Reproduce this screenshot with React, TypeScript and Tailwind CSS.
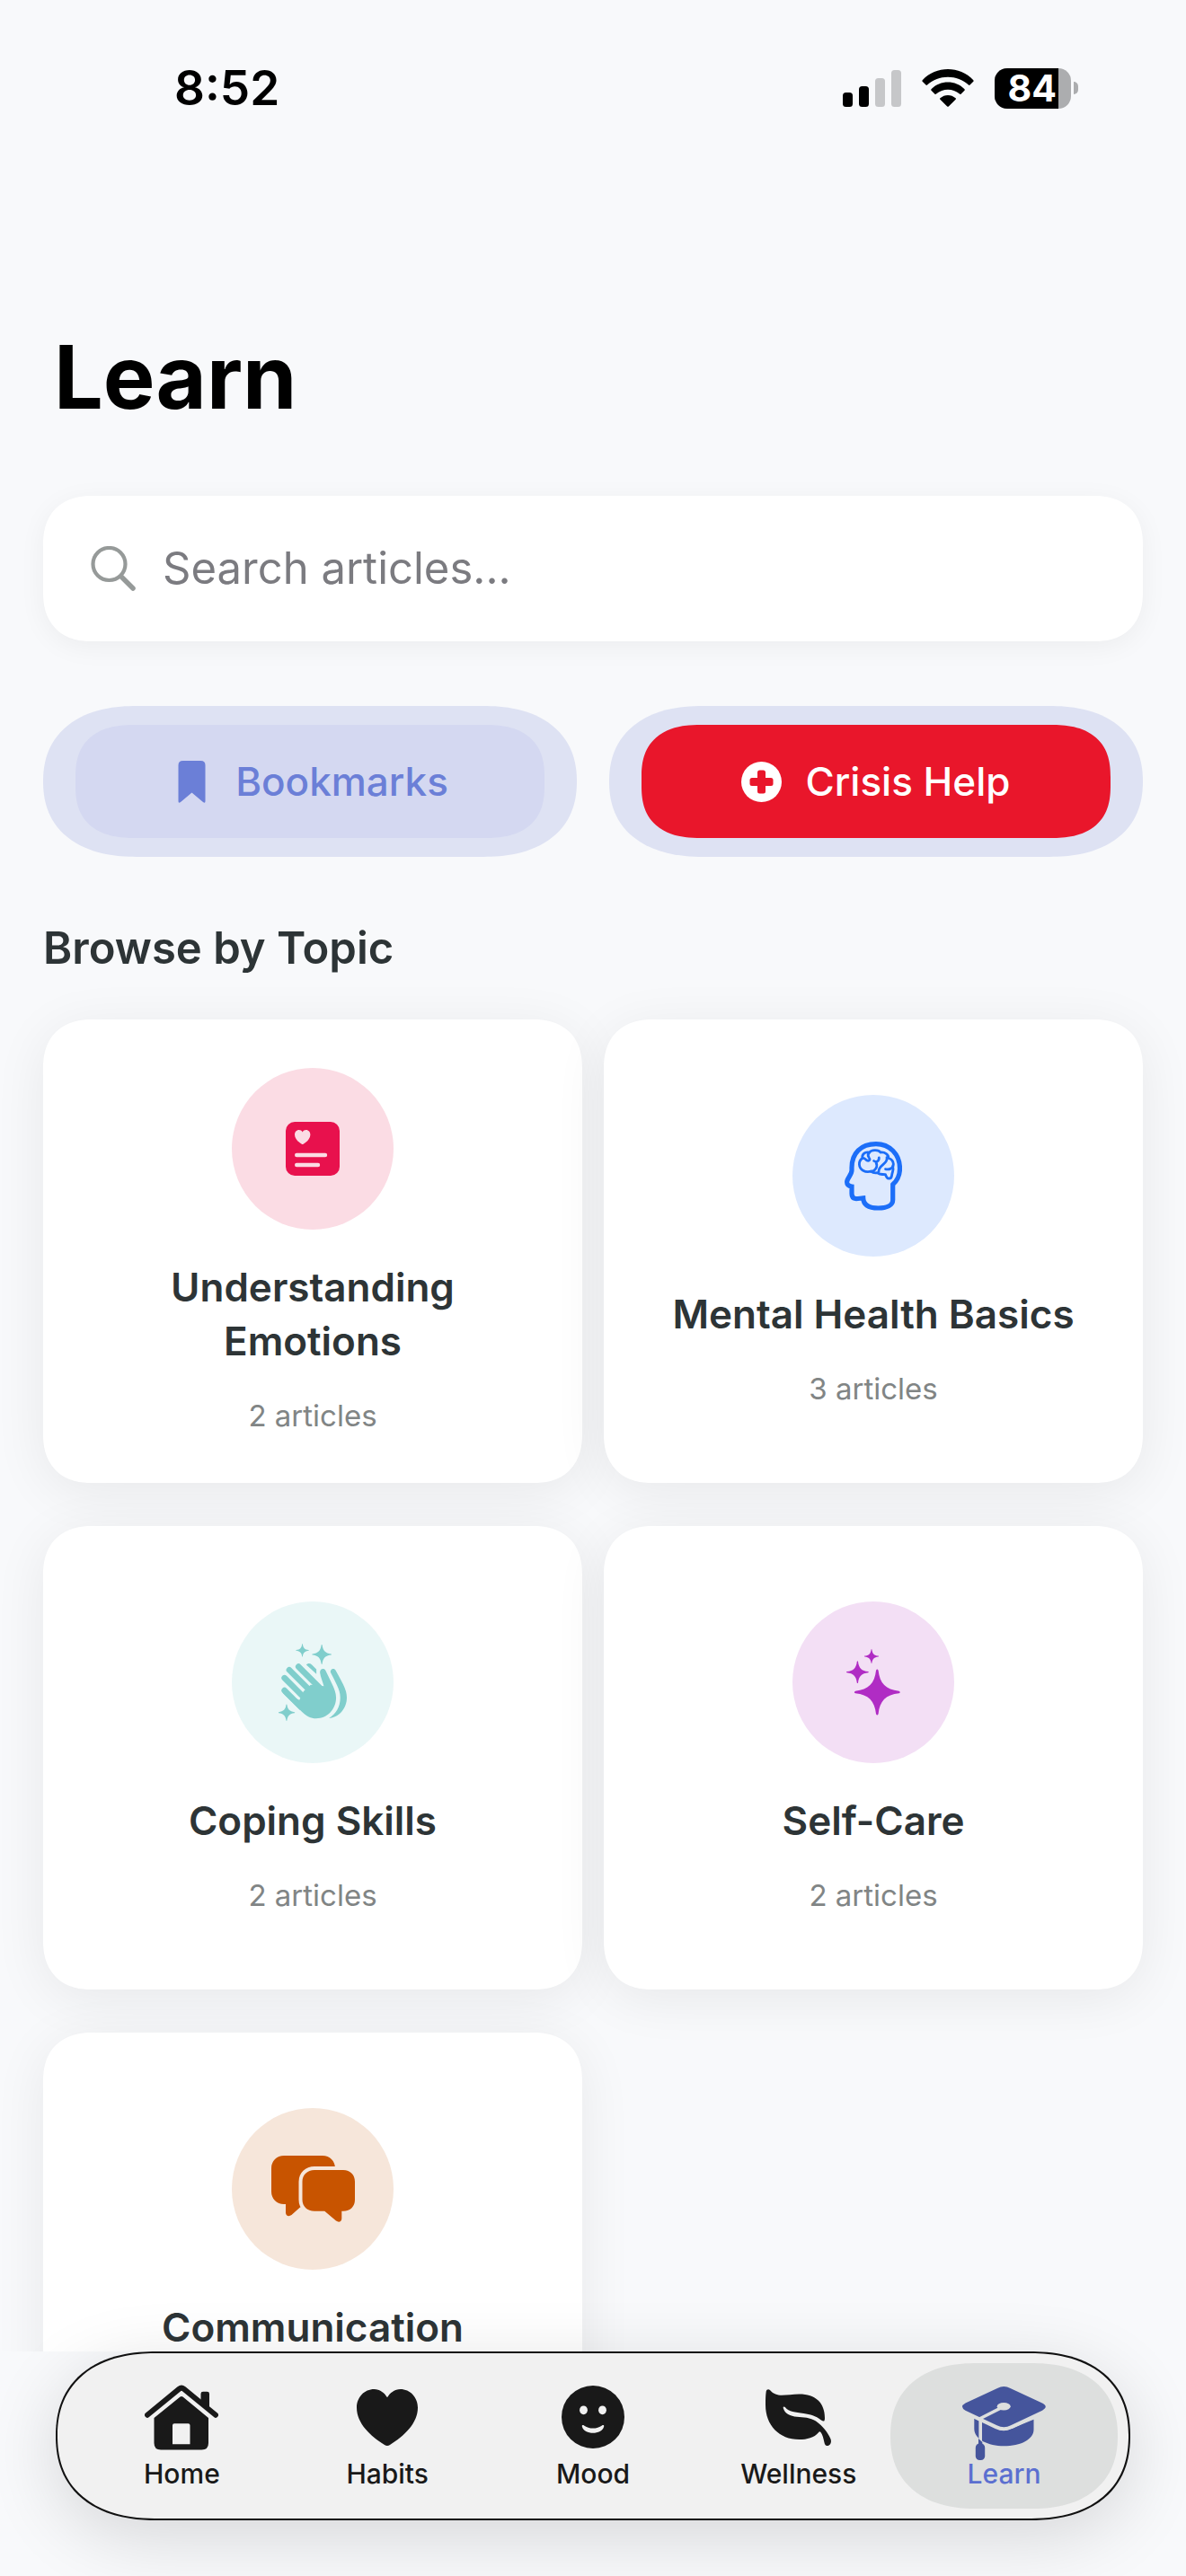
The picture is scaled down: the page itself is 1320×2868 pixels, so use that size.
import { useState } from 'react';
import type { ReactNode } from 'react';

interface SparkleProps {
  x: number;
  y: number;
  r: number;
}

const Sparkle = ({ x, y, r }: SparkleProps) => (
  <path
    transform={`translate(${x} ${y}) scale(${r / 100})`}
    d="M-5 -95Q0 -105 5 -95C11 -38 38 -11 95 -5Q105 0 95 5C38 11 11 38 5 95Q0 105 -5 95C-11 38 -38 11 -95 5Q-105 0 -95 -5C-38 -11 -11 -38 -5 -95Z"
  />
);

const JournalIcon = () => (
  <svg width="60" height="60" viewBox="0 0 60 60" aria-hidden="true">
    <rect width="60" height="60" rx="10" fill="#e8114d" />
    <path
      d="M18.7 11.4C17.8 9.8 16.4 9 14.8 9C12 9 10 11.4 10 14.3C10 18.8 14 22.4 17.8 24.8Q18.7 25.4 19.6 24.8C23.4 22.4 27.4 18.8 27.4 14.3C27.4 11.4 25.4 9 22.6 9C21 9 19.6 9.8 18.7 11.4Z"
      fill="#fbdce4"
    />
    <path d="M12.2 37H44M12.2 48H36" stroke="#fbdce4" strokeWidth="4.4" strokeLinecap="round" />
  </svg>
);

const HeadIcon = () => (
  <svg width="64" height="77" viewBox="0 0 64 77" fill="none" stroke="#1c6ef8" strokeLinejoin="round" aria-hidden="true">
    <path
      strokeWidth="5.2"
      strokeLinejoin="miter"
      d="M35 2.6C50 2.6 61.5 14 61.5 30C61.5 38 58.5 43.5 53.7 47.8V65C53.7 71 47 74 37.5 74C27.5 74 21 70.5 20.7 62.8C16 63.3 14 63.8 12 63.5C9 63 8 61 8 58V50C4.5 49.5 2.6 47.5 2.6 45C2.6 41 8 37 8 32V29C8 13 18 2.6 35 2.6Z"
    />
    <g strokeWidth="2.8" strokeLinecap="round">
      <path d="M20 18.5C18.8 14.5 22.5 11 27.5 12.2C29.5 8.8 38 8.6 40 12C45 11.4 49.2 14.5 49 18.5C53.5 19.6 55.6 24.5 53.8 28.5C54.8 31.5 53 34 52.6 37.5C52 42.5 47 42.5 45.5 36.6C42.5 36.6 38 36.6 36.5 34.6C33 35.2 31 34.4 29.3 33.2C23 34.8 16.8 31.6 16.4 25.5C16.2 22.5 17.6 20 20 18.5Z" />
      <path d="M20 18.5C22 18 23 19.5 24.5 20.8C27 22.3 28.6 20.3 27.6 18.8M27.5 12.2C26 13.6 26 16 27 17.6" />
      <path d="M38.3 17.8C38.6 22 35 23.3 32.6 21.5M35 23C37.5 28 34 33 29.3 33.2" />
      <path d="M47 17.6C48.8 25 37.5 26 38 33.5M45.5 30.6C50 31.6 53.6 29.5 53.8 27" />
    </g>
  </svg>
);

const ClapIcon = () => (
  <svg width="76" height="86" viewBox="329 207 229 259" fill="#80cecc" aria-hidden="true">
    <path
      d="M349 364L404 419M349 322L420 393M365 295L445 375M396 284L470 358"
      stroke="#80cecc"
      strokeWidth="20"
      strokeLinecap="round"
    />
    <path d="M342 371L408 436C424 451 437 458 455 458C493 458 522 427 522 388C522 372 516 358 508 341L487 297C482 287 467 290 468 304C470 320 477 334 481 349L437 345L413 367L399 396Z" />
    <path d="M422 278C427 272 434 272 440 277L456 293V309Z" />
    <path d="M504 304C500 293 515 285 521 297C530 313 538 328 546 344C554 361 558 373 558 388C558 424 532 455 498 457C522 443 536 419 536 388C536 371 531 359 525 346C518 331 511 318 504 304Z" />
    <Sparkle x={409} y={229} r={22} />
    <Sparkle x={474} y={243} r={33} />
    <Sparkle x={356} y={438} r={28} />
  </svg>
);

const SparklesIcon = () => (
  <svg width="60" height="74" viewBox="0 0 60 74" fill="#b02cc4" aria-hidden="true">
    <Sparkle x={34.3} y={48} r={25.5} />
    <Sparkle x={12.4} y={25.7} r={12.4} />
    <Sparkle x={28} y={8} r={8} />
  </svg>
);

const ChatIcon = () => (
  <svg width="93" height="74" viewBox="0 0 93 74" fill="#c85400" aria-hidden="true">
    <path d="M14 0H57C65 0 71 6 71 14V40L32 57.5L22.5 66C19.5 68.3 16 67 16 63.5V54H14C6 54 0 48 0 40V14C0 6 6 0 14 0Z" />
    <path
      d="M48 16H80C88 16 93 21.500 93 29V49C93 56.500 88 61.700 80 61.700H78.300V70C78.300 73.500 75 74.800 72 72.500L59.300 61.700H48C40 61.700 34.500 56.500 34.500 49V29C34.500 21.500 40 16 48 16Z"
      stroke="#f6e6da"
      strokeWidth="8"
      paintOrder="stroke"
    />
  </svg>
);

const HomeIcon = () => (
  <svg width="82" height="73" viewBox="0 0 82 73" fill="currentColor" aria-hidden="true">
    <path d="M3 33.700L38.500 4.600Q41 2.600 43.500 4.600L79 33.700" fill="none" stroke="currentColor" strokeWidth="6" strokeLinecap="round" />
    <path d="M62.500 22V10Q62.500 7.700 65 7.700H69.500Q72 7.700 72 10V28Z" />
    <path
      fillRule="evenodd"
      d="M39.500 13.600Q41 12.400 42.500 13.600L71 37V65Q71 72.500 63.500 72.500H18Q10.500 72.500 10.500 65V37ZM33 43.300Q31 43.300 31 45.300V66.300H50.500V45.300Q50.500 43.300 48.500 43.300Z"
    />
  </svg>
);

const HeartIcon = () => (
  <svg width="68" height="63" viewBox="0 0 68 63" fill="currentColor" aria-hidden="true">
    <path d="M34 9.300C31 4 25.500 0 19.500 0C8.500 0 0 9 0 20.500C0 38 15 52 31 62Q34 63.800 37 62C53 52 68 38 68 20.500C68 9 59.500 0 48.500 0C42.500 0 37 4 34 9.300Z" />
  </svg>
);

const MoodIcon = () => (
  <svg width="70" height="70" viewBox="0 0 70 70" aria-hidden="true">
    <circle cx="35" cy="35" r="35" fill="currentColor" />
    <g fill="#f1f1f1">
      <ellipse cx="24.5" cy="27.300" rx="4.400" ry="4.900" />
      <ellipse cx="45.5" cy="27.300" rx="4.400" ry="4.900" />
      <path d="M22.800 45.500C22.500 44 24 43.700 25 44.500C30.500 48.600 39.500 48.600 45 44.500C46 43.700 47.500 44 47.200 45.500C44.800 55.200 25.200 55.200 22.800 45.500Z" />
    </g>
  </svg>
);

const LeafIcon = () => (
  <svg width="73" height="63" viewBox="0 0 73 63" fill="currentColor" aria-hidden="true">
    <path d="M0.700 2.500C1.200 0 3.500 -0.700 5.200 1.300C9 5.500 13 6.800 18 6.800C24 6.800 30 5.500 37.500 5.500C56 5.500 66 15.500 66 32C66 36 64.800 36.400 62 34.500C55.500 29.500 50 28 42.500 27C33 25.800 26 25.200 22 20.300C20.800 18.800 19.200 19.300 19.800 21.200C21.500 27.200 27.500 29.800 35 30.800C42 31.500 50 31.500 56 35.500C64 41 69.500 48.500 72.500 55.500C74 59.500 71.500 63 68.500 63C66.800 63 66 61.500 65.500 59.500C64.500 55 63.500 50.500 61.500 48C60.500 46.800 59.800 47.300 59 48.200C54 54 46.500 56 37.500 56C15 56 0 40 0 17.500C0 12 0 7 0.700 2.500Z" />
  </svg>
);

// The tassel hangs below the board, so the drawing sits low in its box
const CapIcon = () => (
  <svg width="93" height="96" viewBox="0 -14 93 96" fill="#45559c" className="shrink-0" aria-hidden="true">
    <path d="M13.300 35.500L18.500 38.300H22L39.500 47.500Q46.300 50.500 53 47.500L79.500 36.700V48C79.500 59 65 66.300 46.300 66.300C29 66.300 13.300 59 13.300 47Z" />
    <path
      d="M39 2Q46.300 -2 53.500 2L89 18.500Q96.500 22.500 89 26.700L54 43.300Q46.300 47.200 38.500 43.300L3.500 26.700Q-3.500 22.500 3.500 18.500Z"
      stroke="#dddfde"
      strokeWidth="8"
      paintOrder="stroke"
    />
    <path d="M46 22.300L20.200 35.500V61" fill="none" stroke="#dddfde" strokeWidth="3.600" strokeLinejoin="round" />
    <ellipse cx="46.200" cy="22.300" rx="7.500" ry="4.200" fill="#dddfde" />
    <path d="M18 58L22.300 62V67H18Z" />
    <rect x="14.800" y="63.500" width="10.400" height="18.500" rx="4.500" />
  </svg>
);

interface Topic {
  name: string;
  count: number;
  tint: string;
  icon: ReactNode;
}

const topics: Topic[] = [
  { name: 'Understanding Emotions', count: 2, tint: 'bg-[#fbdce4]', icon: <JournalIcon /> },
  { name: 'Mental Health Basics', count: 3, tint: 'bg-[#dde9fe]', icon: <HeadIcon /> },
  { name: 'Coping Skills', count: 2, tint: 'bg-[#eaf7f7]', icon: <ClapIcon /> },
  { name: 'Self-Care', count: 2, tint: 'bg-[#f3dff5]', icon: <SparklesIcon /> },
  { name: 'Communication', count: 2, tint: 'bg-[#f6e6da]', icon: <ChatIcon /> },
];

const tabs = [
  { name: 'Home', icon: <HomeIcon /> },
  { name: 'Habits', icon: <HeartIcon /> },
  { name: 'Mood', icon: <MoodIcon /> },
  { name: 'Wellness', icon: <LeafIcon /> },
  { name: 'Learn', icon: <CapIcon /> },
];

const StatusBar = () => (
  <div className="flex h-[132px] items-center justify-between pt-16 pr-[120px] pl-[194px] text-black">
    <span className="text-[53px] leading-[66px] font-semibold">8:52</span>
    <div className="flex items-center gap-[23px]">
      <svg width="65" height="41" viewBox="0 0 65 41" aria-hidden="true">
        <rect y="25" width="11" height="16" rx="3.500" />
        <rect x="18" y="18" width="11" height="23" rx="3.500" />
        <rect x="36" y="9" width="11" height="32" rx="3.500" fill="#c6c7c9" />
        <rect x="54" width="11" height="41" rx="3.500" fill="#c6c7c9" />
      </svg>
      <svg width="58" height="42" viewBox="0 0 58 42" aria-hidden="true">
        <path d="M0.700 12.200C16 -4 42 -4 57.300 12.200Q58 13 57.300 13.800L53.500 17.600Q52.700 18.200 52 17.500C39.500 5.800 18.500 5.800 6 17.500Q5.300 18.200 4.500 17.600L0.700 13.800Q0 13 0.700 12.200Z" />
        <path d="M10.500 22.300C20.500 12 37.500 12 47.500 22.300Q48.200 23 47.500 23.700L43.500 27.700Q42.800 28.300 42 27.600C34.500 21.200 23.500 21.200 16 27.600Q15.200 28.300 14.500 27.700L10.500 23.700Q9.800 23 10.500 22.300Z" />
        <path d="M20.400 32.300C25.300 27.800 32.700 27.800 37.600 32.300Q38.300 33 37.600 33.700L29.800 41.500Q29 42.200 28.200 41.500L20.400 33.700Q19.700 33 20.400 32.300Z" />
      </svg>
      <div className="flex items-center gap-[3px]">
        <div className="flex h-[45px] rounded-[14px] bg-[#acadaf]">
          <span className="w-[71px] rounded-l-[14px] bg-black pr-0.5 text-right text-[41px] leading-[45px] font-bold text-white">
            84
          </span>
          <span className="w-3.5" />
        </div>
        <span className="h-3.5 w-[5px] rounded-r-full bg-[#acadaf]" />
      </div>
    </div>
  </div>
);

const TopicCard = ({ topic }: { topic: Topic }) => (
  <button
    type="button"
    className="flex min-h-[516px] flex-col items-center justify-center rounded-[54px] bg-white px-12 shadow-[0_10px_60px_rgba(0,0,0,0.07)] [corner-shape:superellipse(1.2)]"
  >
    <span className={`flex size-[180px] items-center justify-center rounded-full ${topic.tint}`}>{topic.icon}</span>
    <span className="mt-[34px] text-[44px] leading-[60px] font-semibold text-[#2d3436]">{topic.name}</span>
    <span className="mt-8 text-[33px] leading-[42px] text-[#818585]">{topic.count} articles</span>
  </button>
);

const App = () => {
  const [query, setQuery] = useState('');
  const [activeTab, setActiveTab] = useState('Learn');

  return (
    <div className="flex h-screen flex-col bg-[#f8f9fb] font-['Inter',sans-serif]">
      <main className="min-h-0 flex-1 overflow-y-auto [scrollbar-width:none]">
        <StatusBar />
        <div className="px-12 pb-12">
          <h1 className="mt-[238px] px-3 text-[97px] leading-[100px] font-bold text-black">Learn</h1>

          {/* Search */}
          <label className="mt-[82px] flex h-[162px] items-center gap-[30px] rounded-[54px] bg-white px-[53px] shadow-[0_6px_30px_rgba(0,0,0,0.05)] [corner-shape:superellipse(1.2)]">
            <svg width="50" height="50" viewBox="0 0 50 50" fill="none" stroke="#969a99" strokeLinecap="round" aria-hidden="true">
              <circle cx="20.500" cy="20" r="18" strokeWidth="4.200" />
              <path d="M34 34L47 47" strokeWidth="5.500" />
            </svg>
            <input
              type="text"
              aria-label="Search articles"
              value={query}
              onChange={(e) => setQuery(e.target.value)}
              placeholder="Search articles..."
              className="min-w-0 flex-1 bg-transparent text-[49px] leading-[60px] text-[#2d3436] outline-none placeholder:text-[#7b7b80]"
            />
          </label>

          {/* Quick actions */}
          <div className="mt-[72px] grid grid-cols-2 gap-9">
            <div className="rounded-[104px/84px] bg-[#dee2f3] px-9 py-[21px] [corner-shape:superellipse(1.2)]">
              <button
                type="button"
                className="flex h-[126px] w-full items-center justify-center gap-[26px] rounded-[66px/58px] bg-[#d4d8f1] text-[44px] leading-[60px] font-medium text-[#6b7fd7] [corner-shape:superellipse(1.3)]"
              >
                <svg width="45" height="47" viewBox="0 0 45 47" fill="currentColor" aria-hidden="true">
                  <path d="M12.500 0H32.500Q37.500 0 37.500 5V45Q37.500 48 35 46L22.500 35.500L10 46Q7.500 48 7.500 45V5Q7.500 0 12.500 0Z" />
                </svg>
                Bookmarks
              </button>
            </div>
            <div className="rounded-[104px/84px] bg-[#dee2f3] px-9 py-[21px] [corner-shape:superellipse(1.2)]">
              <button
                type="button"
                className="flex h-[126px] w-full items-center justify-center gap-[26px] rounded-[66px/58px] bg-[#e9162b] text-[44px] leading-[60px] font-medium text-white [corner-shape:superellipse(1.3)]"
              >
                <svg width="45" height="45" viewBox="0 0 45 45" aria-hidden="true">
                  <circle cx="22.500" cy="22.500" r="22.500" fill="currentColor" />
                  <rect x="18" y="9.500" width="9" height="26" rx="2.500" fill="#e9162b" />
                  <rect x="9.500" y="18" width="26" height="9" rx="2.500" fill="#e9162b" />
                </svg>
                Crisis Help
              </button>
            </div>
          </div>

          <h2 className="mt-[72px] text-[49px] leading-[60px] font-semibold text-[#2d3436]">Browse by Topic</h2>
          <div className="mt-[49px] grid grid-cols-2 gap-x-6 gap-y-12">
            {topics.map((topic) => (
              <TopicCard key={topic.name} topic={topic} />
            ))}
          </div>
        </div>
      </main>

      {/* Tab bar floats on its own strip; its shadow falls over the scrolled cards */}
      <footer className="relative z-10 bg-[#f8f9fb] px-[62px] pb-[62px]">
        <nav className="grid h-[188px] grid-cols-5 rounded-[112px/94px] border-2 border-[#111111] bg-[#f1f1f1] px-6 shadow-[0_18px_80px_rgba(0,0,0,0.14)] [corner-shape:superellipse(1.2)]">
          {tabs.map((tab) => (
            <button
              key={tab.name}
              type="button"
              onClick={() => setActiveTab(tab.name)}
              className={`-mx-3 my-[11px] flex flex-col items-center rounded-[96px/81px] pt-5 text-[30px] leading-[36px] font-medium [corner-shape:superellipse(1.2)] ${
                activeTab === tab.name ? 'bg-[#dddfde] text-[#5b6fd0]' : 'text-[#191919]'
              }`}
            >
              <span className="flex h-20 items-center justify-center">{tab.icon}</span>
              <span className="mt-[5px]">{tab.name}</span>
            </button>
          ))}
        </nav>
      </footer>
    </div>
  );
};

export default App;
